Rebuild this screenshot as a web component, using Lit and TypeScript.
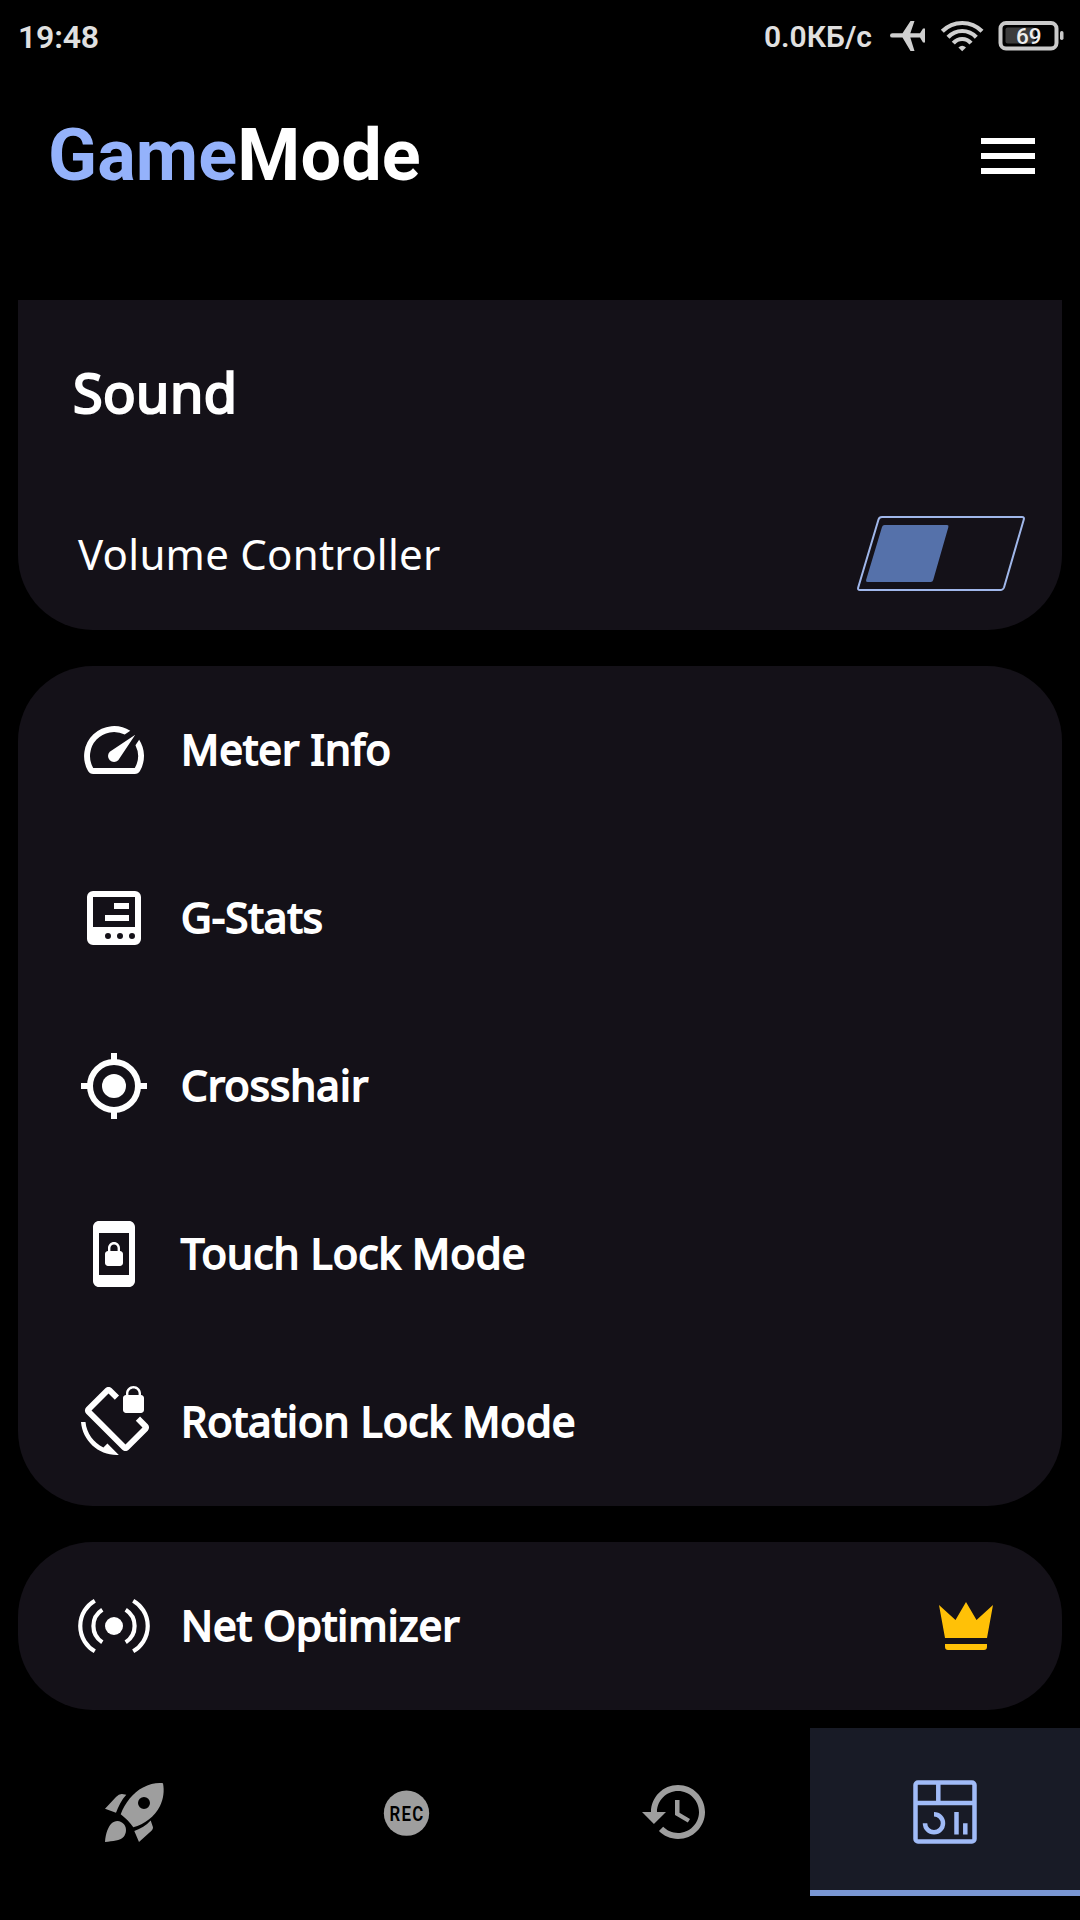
import { LitElement, html, css, svg, type TemplateResult } from "lit";
import { customElement, property } from "lit/decorators.js";
import { classMap } from "lit/directives/class-map.js";

const icons: Record<string, TemplateResult> = {
  meter: svg`<path d="M20.38 8.57l-1.23 1.85a8 8 0 0 1-.22 7.58H5.07A8 8 0 0 1 15.58 6.85l1.85-1.23A10 10 0 0 0 3.35 19a2 2 0 0 0 1.72 1h13.85a2 2 0 0 0 1.74-1 10 10 0 0 0-.27-10.44zm-9.79 6.84a2 2 0 0 0 2.83 0l5.66-8.49-8.49 5.66a2 2 0 0 0 0 2.83z"/>`,
  stats: svg`<path fill-rule="evenodd" d="M5 3h14a2 2 0 0 1 2 2v14a2 2 0 0 1-2 2H5a2 2 0 0 1-2-2V5a2 2 0 0 1 2-2zm0 2v10h14V5zm7 2h5v2h-5zm-3 4h8v2H9zm0 7a1 1 0 1 0 2 0a1 1 0 1 0-2 0zm4 0a1 1 0 1 0 2 0a1 1 0 1 0-2 0zm4 0a1 1 0 1 0 2 0a1 1 0 1 0-2 0z"/>`,
  crosshair: svg`<circle cx="12" cy="12" r="8" fill="none" stroke="currentColor" stroke-width="2"/><circle cx="12" cy="12" r="4"/><path d="M11 1h2v3h-2zM11 20h2v3h-2zM1 11h3v2H1zM20 11h3v2h-3z"/>`,
  touch: svg`<path d="M10 16h4c.55 0 1-.45 1-1v-3c0-.55-.45-1-1-1v-1c0-1.11-.9-2-2-2-1.11 0-2 .9-2 2v1c-.55 0-1 .45-1 1v3c0 .55.45 1 1 1zm.8-6c0-.66.54-1.2 1.2-1.2.66 0 1.2.54 1.2 1.2v1h-2.4v-1zM17 1H7c-1.1 0-2 .9-2 2v18c0 1.1.9 2 2 2h10c1.1 0 2-.9 2-2V3c0-1.1-.9-2-2-2zm0 18H7V5h10v14z"/>`,
  rotation: svg`<path d="M23.25 12.77l-2.57-2.57-1.41 1.41 2.22 2.22-5.66 5.66L4.51 8.17l5.66-5.66 2.1 2.1 1.41-1.41L11.23.75c-.59-.59-1.54-.59-2.12 0L2.75 7.11c-.59.59-.59 1.54 0 2.12l12.02 12.02c.59.59 1.54.59 2.12 0l6.36-6.36c.59-.59.59-1.54 0-2.12zM8.47 20.48C5.2 18.94 2.86 15.76 2.5 12H1c.51 6.16 5.66 11 11.95 11l.66-.03-3.81-3.82-1.33 1.33zM16 9h5c.55 0 1-.45 1-1V4c0-.55-.45-1-1-1v-.5C21 1.12 19.88 0 18.5 0S16 1.12 16 2.5V3c-.55 0-1 .45-1 1v4c0 .55.45 1 1 1zm.8-6.5c0-.94.76-1.7 1.7-1.7s1.7.76 1.7 1.7V3h-3.4v-.5z"/>`,
  net: svg`<circle cx="12" cy="12" r="3"/><path fill="none" stroke="currentColor" stroke-width="1.4" d="M5.6 3.6A9.7 9.7 0 0 0 5.6 20.4M18.4 3.6A9.7 9.7 0 0 1 18.4 20.4M8.1 6.6A6.4 6.4 0 0 0 8.1 17.4M15.9 6.6A6.4 6.4 0 0 1 15.9 17.4"/>`,
  crown: svg`<path d="M5 16L3 5l5.5 5L12 4l3.5 6L21 5l-2 11H5m14 3c0 .6-.4 1-1 1H6c-.6 0-1-.4-1-1v-1h14v1z"/>`,
  history: svg`<path d="M13 3c-4.97 0-9 4.03-9 9H1l3.89 3.89.07.14L9 12H6c0-3.87 3.13-7 7-7s7 3.13 7 7-3.13 7-7 7c-1.93 0-3.68-.79-4.94-2.06l-1.42 1.42C8.27 19.99 10.51 21 13 21c4.97 0 9-4.03 9-9s-4.03-9-9-9zm-1 5v5l4.28 2.54.72-1.21-3.5-2.08V8H12z"/>`,
  rocket: svg`<g transform="translate(2 2) scale(.33333)"><path fill-rule="evenodd" d="M15.7 32.3C20 21 28 10.500 38 5.500C45 1.800 52 .6 58 1.300C59.500 9 58.500 17 55 24C49.500 35 39.500 42 28.300 45.300C25 40.500 20.500 36 15.700 32.300zM33 21a6 6 0 1 0 12 0a6 6 0 1 0-12 0z"/><path d="M0 26.700L11 15Q14 11.800 17 12L21.300 12.800C16.500 18 13.500 24.500 11 30.700zM29.300 49C36 46.600 41 43.500 45.700 38.500L48 45.300Q48.200 47 46.500 48.800L34 60zM0 60C.6 51 3.500 44.500 6.200 41.700C10.500 37.400 16 38.500 19 42.200C22 46 21.500 51.500 18.500 55C15 58.700 8 59 0 60z"/></g>`,
  rec: svg`<circle cx="12.500" cy="12.400" r="7.550"/><text class="rec" transform="translate(6.850 15) scale(.8 1)">REC</text>`,
  dashboard: svg`<g transform="scale(.33333)" fill="none" stroke="currentColor" stroke-width="4.500"><rect x="6.500" y="6.500" width="59" height="59" rx="2.500"/><path d="M5 27H67M29.300 6V27M25 38.300A9 9 0 1 1 16 47.300M47.500 36V58.600M56.300 47.300V58.600"/></g>`,
};

@customElement("gm-icon")
export class GmIcon extends LitElement {
  static styles = css`
    :host { display: block; width: 72px; height: 72px; flex: none; }
    .glyph { display: block; width: 72px; height: 72px; overflow: visible; }
    .rec { font: 600 7px "Roboto", sans-serif; letter-spacing: 0.55px; fill: #000; }
  `;
  @property() name = "meter";
  render() {
    return html`<svg class="glyph" viewBox="0 0 24 24" fill="currentColor">${icons[this.name]}</svg>`;
  }
}

@customElement("app-root")
export class AppRoot extends LitElement {
  static styles = css`
    :host {
      display: flex; flex-direction: column; width: 1080px; height: 1920px;
      overflow: hidden; background: #000; color: #fff;
      font-family: "Noto Sans", sans-serif;
    }
    .status {
      height: 72px; flex: none; display: flex; align-items: flex-start;
      justify-content: space-between; padding: 0 16px 0 18px; box-sizing: border-box;
      font-family: "Roboto", sans-serif; color: #e0e0e0;
    }
    .clock { font-size: 32px; font-weight: 600; line-height: 74px; letter-spacing: -0.2px; }
    .indicators { display: flex; align-items: flex-start; }
    .speed { font-size: 30px; font-weight: 600; line-height: 73px; margin-right: 17px; }
    .sys { display: block; width: 175px; height: 72px; }
    .level { font: 500 22.500px "Roboto", sans-serif; fill: #eee; }
    .header {
      height: 168px; margin-bottom: 60px; flex: none; display: flex; align-items: center;
      justify-content: space-between; padding: 0 45px 0 48px; box-sizing: border-box;
    }
    .brand { margin: 0; font: 700 72px/84px "Roboto", sans-serif; letter-spacing: 0.1px; }
    .accent { color: #94b2fb; }
    .menu { display: block; width: 54px; height: 36px; }
    .content { display: flex; flex-direction: column; gap: 36px; padding: 0 18px; height: 1428px; flex: none; }
    .card { background: #141118; border-radius: 75px; }
    .sound { height: 330px; border-radius: 0 0 75px 75px; box-sizing: border-box; padding: 52px 36px 0 54px; }
    .title { margin: 0; padding-left: 1px; font-size: 54px; font-weight: 400; line-height: 80px; letter-spacing: 0.4px; -webkit-text-stroke: 2.2px #fff; }
    .volume { display: flex; justify-content: space-between; align-items: center; height: 78px; margin-top: 83px; padding-left: 6px; }
    .label { font-size: 42px; line-height: 60px; letter-spacing: 0.26px; }
    .toggle { display: block; width: 170px; height: 78px; }
    .row { height: 168px; display: flex; align-items: center; padding: 0 60px; gap: 31px; }
    .name { font-size: 42px; font-weight: 400; line-height: 60px; flex: 1; padding-bottom: 2px; letter-spacing: 0.12px; -webkit-text-stroke: 1.8px #fff; }
    .premium { color: #ffc107; }
    .nav { display: flex; height: 168px; flex: none; }
    .tab { width: 270px; display: flex; align-items: center; justify-content: center; color: #9e9e9e; box-sizing: border-box; }
    .active { background: #181b26; color: #a0bbf7; border-bottom: 6px solid #7a97d4; border-top: 6px solid #181b26; }
  `;

  private rows = [
    ["meter", "Meter Info"],
    ["stats", "G-Stats"],
    ["crosshair", "Crosshair"],
    ["touch", "Touch Lock Mode"],
    ["rotation", "Rotation Lock Mode"],
  ];
  private tabs = ["rocket", "rec", "history", "dashboard"];

  private row(icon: string, label: string, premium = false) {
    return html`<div class="row">
      <gm-icon name=${icon}></gm-icon><span class="name">${label}</span>
      ${premium ? html`<gm-icon class="premium" name="crown"></gm-icon>` : null}
    </div>`;
  }

  render() {
    return html`
      <div class="status">
        <span class="clock">19:48</span>
        <div class="indicators">
          <span class="speed">0.0КБ/с</span>
          <svg class="sys" viewBox="889 0 175 72">
            <path fill="#cfcfcf" d="M892.500 33.300H902.500L910.500 21H914.500L910.300 33.300H920L923 28.500H925V42.500H923L920 37.600H910.300L914.500 51H910.500L902.500 37.600H892.500Q890 37.600 890 35.400Q890 33.300 892.500 33.300z"/>
            <g fill="none" stroke="#cfcfcf" stroke-width="4.200">
              <path d="M942.300 31.300Q950.500 23 962.200 23T982 31.300"/>
              <path d="M948 37.200Q954 31 962.200 31T976.300 37.200"/>
              <path d="M953.300 43.200Q957 39 962.200 39T971 43.200"/>
            </g>
            <path fill="#cfcfcf" d="M958.400 47.500Q962.200 44.200 966 47.500L962.200 51.300z"/>
            <rect x="1000.500" y="23" width="56" height="25.500" rx="5.500" fill="none" stroke="#cacaca" stroke-width="4"/>
            <rect x="1005.500" y="27.500" width="29" height="16" rx="2" fill="#3c3c3c"/>
            <rect x="1060" y="31" width="3.500" height="9" rx="1.700" fill="#cacaca"/>
            <text class="level" x="1016" y="43.800">69</text>
          </svg>
        </div>
      </div>
      <header class="header">
        <h1 class="brand"><span class="accent">Game</span>Mode</h1>
        <svg class="menu" viewBox="0 0 54 36" fill="#fff"><path d="M0 0h54v6H0zM0 15h54v6H0zM0 30h54v6H0z"/></svg>
      </header>
      <main class="content">
        <section class="card sound">
          <h2 class="title">Sound</h2>
          <div class="volume">
            <span class="label">Volume Controller</span>
            <svg class="toggle" viewBox="856 515 170 78">
              <path fill="none" stroke="#a0b7ea" stroke-width="2" stroke-linejoin="round" d="M882 517H1022Q1024.500 517 1023.800 519.500L1004 587.500Q1003 590 1000.500 590H860Q857.500 590 858.200 587.500L878.500 519.500Q879.300 517 882 517z"/>
              <path fill="#5571aa" d="M884.500 525H947Q949 525 948.400 527L933.200 580Q932.700 582 930.700 582H867.500Q865.500 582 866.100 580L882 527Q882.600 525 884.500 525z"/>
            </svg>
          </div>
        </section>
        <section class="card">${this.rows.map(([i, l]) => this.row(i, l))}</section>
        <section class="card">${this.row("net", "Net Optimizer", true)}</section>
      </main>
      <nav class="nav">
        ${this.tabs.map((t) => html`<div class=${classMap({ tab: true, active: t === "dashboard" })}><gm-icon name=${t}></gm-icon></div>`)}
      </nav>
    `;
  }
}
